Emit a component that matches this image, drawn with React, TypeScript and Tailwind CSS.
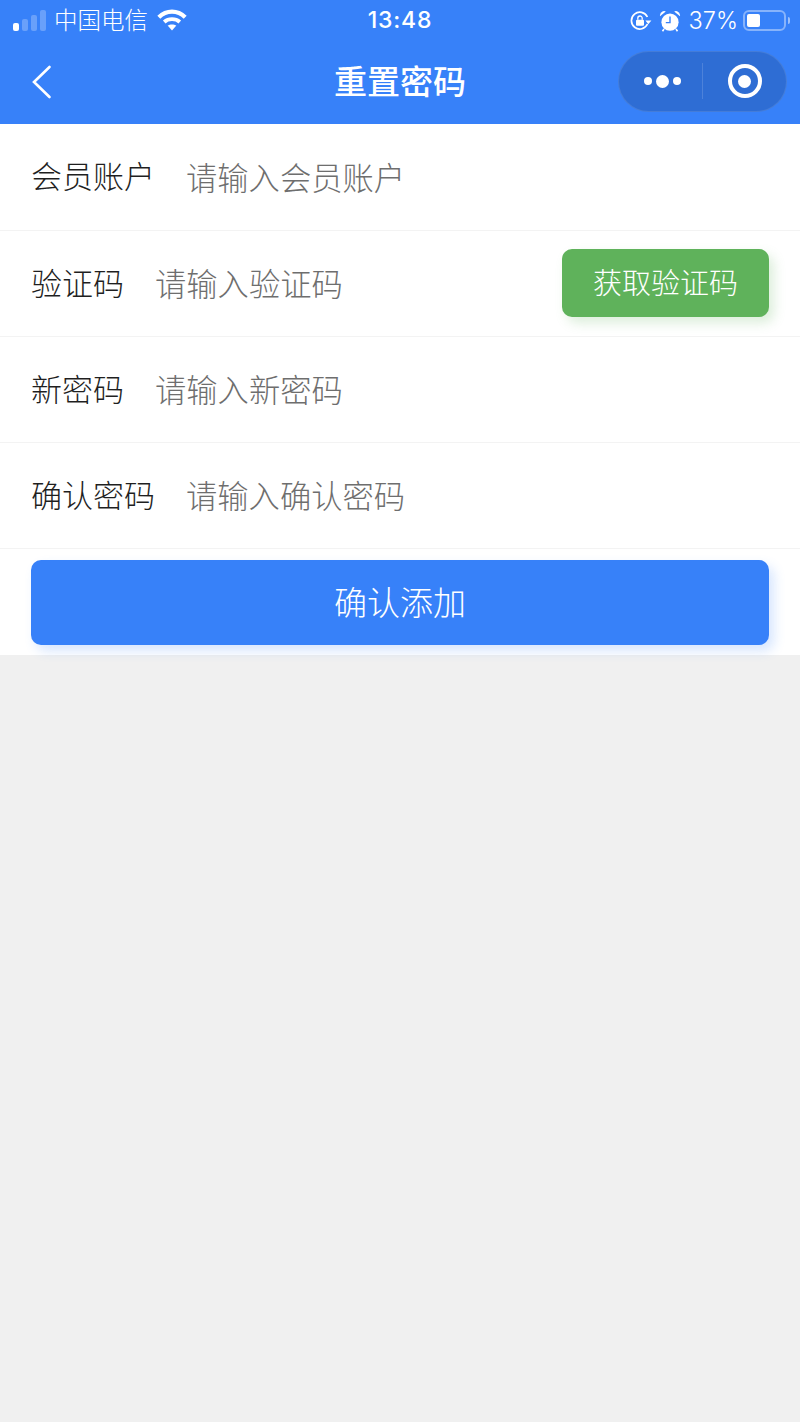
const FONT = "font-['Noto_Sans_CJK_SC','Liberation_Sans',sans-serif]";

function SignalBars() {
  return (
    <div className="flex items-end gap-[3px] h-[21px] -mt-[1px]">
      <div className="w-[6px] h-[8px] rounded-[2px] bg-white" />
      <div className="w-[6px] h-[12px] rounded-[2px] bg-white/25" />
      <div className="w-[6px] h-[16px] rounded-[2px] bg-white/25" />
      <div className="w-[6px] h-[21px] rounded-[2px] bg-white/25" />
    </div>
  );
}

function Wifi() {
  return (
    <svg width="30" height="22" viewBox="0 0 30 22" fill="none">
      <path d="M1.8 8.2 C9.5 0.8 20.5 0.8 28.2 8.2" stroke="#fff" strokeWidth="4.2" />
      <path d="M7.2 13 C11.5 9.2 18.5 9.2 22.8 13" stroke="#fff" strokeWidth="3.8" />
      <path d="M15 21.5 L10.6 16.6 C13 15 17 15 19.4 16.6 Z" fill="#fff" />
    </svg>
  );
}

function RotationLock() {
  return (
    <svg width="22" height="22" viewBox="0 0 22 22" fill="none">
      <path d="M17.5 14 A8.4 8.4 0 1 1 17.4 7" stroke="#fff" strokeWidth="1.7" />
      <path d="M15.4 10.5 L21.4 10.5 L18.3 14.2 Z" fill="#fff" />
      <rect x="6" y="9.8" width="8" height="6" rx="1" fill="#fff" />
      <path d="M7.8 9.8 V8.2 a2.2 2.2 0 0 1 4.4 0 V9.8" stroke="#fff" strokeWidth="1.3" />
    </svg>
  );
}

function Alarm() {
  return (
    <svg width="22" height="22" viewBox="0 0 22 22" fill="none">
      <circle cx="11" cy="12.2" r="8.6" fill="#fff" />
      <path d="M11 6.5 V12.6 H6.8" stroke="#3781f9" strokeWidth="1.4" />
      <path d="M1 6.2 A4.4 4.4 0 0 1 6.8 1.4 Z" fill="#fff" />
      <path d="M21 6.2 A4.4 4.4 0 0 0 15.2 1.4 Z" fill="#fff" />
      <path d="M5 19 L3.5 21.2 M17 19 L18.5 21.2" stroke="#fff" strokeWidth="1.6" />
    </svg>
  );
}

function Battery() {
  return (
    <div className="flex items-center gap-[2px]">
      <div className="w-[43px] h-[21px] rounded-[6px] border-2 border-white/40 p-[2px] flex">
        <div className="w-[13px] rounded-[2px] bg-white" />
      </div>
      <div className="w-[2px] h-[7px] rounded-r-[2px] bg-white/50" />
    </div>
  );
}

function StatusBar() {
  return (
    <div className="h-[41px] flex items-center justify-between pl-[13px] pr-[10px] text-white">
      <div className="flex-1 flex items-center">
        <SignalBars />
        <span className="ml-[8px] -mt-[2px] text-[23.5px] leading-none font-light">中国电信</span>
        <span className="ml-[9px] -mt-[1px] flex"><Wifi /></span>
      </div>
      <span className="-ml-[3px] text-[23px] leading-none tracking-[0.8px] font-['Inter',sans-serif] font-medium">13:48</span>
      <div className="flex-1 flex items-center justify-end">
        <RotationLock />
        <span className="ml-[7px] flex"><Alarm /></span>
        <span className="ml-[8px] mr-[5px] text-[23.5px] leading-none font-['Inter',sans-serif] font-light">37%</span>
        <Battery />
      </div>
    </div>
  );
}

function Capsule() {
  return (
    <div className="w-[169px] h-[61px] flex items-center rounded-full border border-white/10 bg-black/15">
      <div className="flex-1 flex items-center justify-center">
        <div className="ml-[4px] flex items-center gap-[4px]">
          <div className="w-[8px] h-[8px] rounded-full bg-white" />
          <div className="w-[13px] h-[13px] rounded-full bg-white" />
          <div className="w-[8px] h-[8px] rounded-full bg-white" />
        </div>
      </div>
      <div className="w-px h-[36px] bg-white/15" />
      <div className="flex-1 flex items-center justify-center">
        <div className="w-[34px] h-[34px] rounded-full border-[4px] border-white flex items-center justify-center">
          <div className="w-[13px] h-[13px] rounded-full bg-white" />
        </div>
      </div>
    </div>
  );
}

function NavBar() {
  return (
    <div className="relative h-[83px] flex items-center justify-between pl-[31px] pr-[13px]">
      <svg width="22" height="34" viewBox="0 0 22 34" fill="none" className="-mt-[2px]">
        <path d="M18.5 2 L3 17 L18.5 32" stroke="#fff" strokeWidth="2.6" strokeLinecap="round" />
      </svg>
      <span className="absolute inset-x-0 -mt-[5px] text-center text-[33px] leading-none font-medium text-white">重置密码</span>
      <div className="relative -mt-[3px]"><Capsule /></div>
    </div>
  );
}

function Row({ label, placeholder, children, first }: { label: string; placeholder: string; children?: React.ReactNode; first?: boolean }) {
  return (
    <div className={`${first ? "h-[107px]" : "h-[106px]"} flex items-center pl-[31px] pr-[31px] border-b border-[#f3f3f3]`}>
      <span className="text-[31px] leading-none font-light text-[#1f1f1f] -mt-[5px]">{label}</span>
      <span className="ml-[31px] -mt-[1px] text-[31.3px] leading-none font-light text-[#6e6e6e] flex-1">{placeholder}</span>
      {children}
    </div>
  );
}

export default function App() {
  return (
    <div className={`${FONT} w-[800px] h-[1422px] bg-[#f0f0f0] flex flex-col overflow-hidden`}>
      <div className="bg-[#3781f9] h-[124px]">
        <StatusBar />
        <NavBar />
      </div>
      <div className="bg-white h-[531px] flex flex-col">
        <Row first label="会员账户" placeholder="请输入会员账户" />
        <Row label="验证码" placeholder="请输入验证码">
          <button className="w-[207px] h-[68px] -mt-[1px] pb-[3px] rounded-[10px] bg-[#5fb25b] text-white text-[29px] font-light leading-none shadow-[5px_6px_12px_rgba(95,178,91,0.22)]">
            获取验证码
          </button>
        </Row>
        <Row label="新密码" placeholder="请输入新密码" />
        <Row label="确认密码" placeholder="请输入确认密码" />
        <div className="flex-1 px-[31px] pt-[11px]">
          <button className="w-full h-[85px] pb-[2px] rounded-[10px] bg-[#3781f9] text-white text-[33px] font-light leading-none shadow-[5px_6px_12px_rgba(55,129,249,0.2)]">
            确认添加
          </button>
        </div>
      </div>
    </div>
  );
}
